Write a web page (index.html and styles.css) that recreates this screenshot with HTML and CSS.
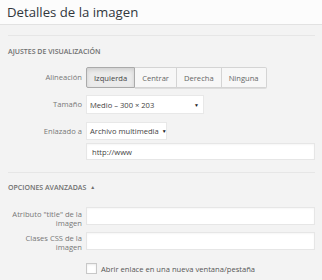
FILE: index.html
```html
<!DOCTYPE html>
<html lang="es">

<head>
    <meta charset="UTF-8" />
    <meta name="viewport" content="width=device-width, initial-scale=1.0" />
    <title>Detalles de la imagen</title>
    <link rel="stylesheet" href="styles.css">
</head>

<body>
    <div class="media-header">
        <h1>Detalles de la imagen</h1>
    </div>

    <div class="media-panel">
        <div class="rule rule-top"></div>
        <h2 class="section-title">Ajustes de visualización</h2>

        <div class="setting">
            <span class="setting-label">Alineación</span>
            <div class="button-group">
                <button class="active">Izquierda</button>
                <button>Centrar</button>
                <button>Derecha</button>
                <button>Ninguna</button>
            </div>
        </div>

        <div class="setting setting-size">
            <span class="setting-label">Tamaño</span>
            <div class="fake-select size-select">
                <span>Medio – 300 × 203</span>
                <span class="arrow">▼</span>
            </div>
        </div>

        <div class="setting setting-link">
            <span class="setting-label">Enlazado a</span>
            <div class="fake-select link-select">
                <span>Archivo multimedia</span>
                <span class="arrow">▼</span>
            </div>
        </div>

        <div class="setting setting-url">
            <span class="setting-label"></span>
            <input type="text" class="text-input url-input" value="http://www" />
        </div>

        <div class="rule rule-middle"></div>
        <h2 class="section-title advanced-title">Opciones avanzadas <span class="toggle">▲</span></h2>

        <div class="setting setting-wide setting-title">
            <span class="setting-label">Atributo "title" de la imagen</span>
            <input type="text" class="text-input" />
        </div>

        <div class="setting setting-wide setting-class">
            <span class="setting-label">Clases CSS de la imagen</span>
            <input type="text" class="text-input" />
        </div>

        <div class="setting setting-check">
            <span class="setting-label"></span>
            <label class="check-label"><span class="checkbox"></span>Abrir enlace en una nueva ventana/pestaña</label>
        </div>
    </div>
</body>

</html>
```

FILE: styles.css
```css
body {
    margin: 0;
    padding: 0;
    background-color: #f3f3f3;
    font-family: 'Open Sans', sans-serif;
    color: #777;
    font-size: 7.6px;
}

.media-header {
    height: 24px;
    background: #fcfcfc;
    border-bottom: 1px solid #e2e2e2;
    padding-left: 7px;
}

.media-header h1 {
    margin: 0;
    font-size: 13.2px;
    font-weight: 400;
    line-height: 24px;
    color: #32373c;
}

.media-panel {
    padding: 0 7px 0 8px;
}

.rule {
    border-top: 1px solid #e6e6e6;
}

.rule-top {
    margin-top: 10px;
}

.section-title {
    margin: 11px 0 0;
    font-size: 7px;
    font-weight: 600;
    line-height: 10px;
    text-transform: uppercase;
    color: #6f6f6f;
}

.toggle {
    font-size: 5px;
    margin-left: 2px;
    vertical-align: 1px;
}

.setting {
    display: flex;
    align-items: center;
    gap: 4px;
    margin-top: 10px;
}

.setting-label {
    flex: 0 0 74px;
    text-align: right;
    line-height: 9px;
}

.button-group {
    display: flex;
    height: 21px;
}

.button-group button {
    font-family: 'Open Sans', sans-serif;
    font-size: 7.6px;
    color: #666;
    background: #f7f7f7;
    border: 1px solid #d4d4d4;
    border-left-width: 0;
    padding: 0 7px;
    margin: 0;
    box-shadow: 0 1px 0 #ddd;
}

.button-group button:first-child {
    border-left-width: 1px;
    border-radius: 2px 0 0 2px;
}

.button-group button:last-child {
    border-radius: 0 2px 2px 0;
}

.button-group button.active {
    background: #ebebeb;
    border-color: #aaa;
    box-shadow: inset 0 2px 4px rgba(0, 0, 0, 0.12);
    color: #444;
}

.fake-select {
    display: flex;
    align-items: center;
    justify-content: space-between;
    box-sizing: border-box;
    background: #fff;
    border: 1px solid #e8e8e8;
    padding: 0 4px 0 3px;
    color: #444;
    white-space: nowrap;
}

.fake-select .arrow {
    font-size: 5px;
    color: #222;
}

.setting-size {
    margin-top: 7px;
}

.size-select {
    width: 118px;
    height: 19px;
}

.setting-link {
    margin-top: 8px;
}

.link-select {
    width: 81px;
    height: 18px;
}

.link-select .arrow {
    margin-left: 3px;
}

.setting-url {
    margin-top: 3px;
}

.text-input {
    flex: 1;
    min-width: 0;
    box-sizing: border-box;
    height: 17px;
    margin: 0;
    padding: 0 5px;
    background: #fff;
    border: 1px solid #e6e6e6;
    box-shadow: inset 0 1px 2px rgba(0, 0, 0, 0.04);
    font-family: 'Open Sans', sans-serif;
    font-size: 7.6px;
    color: #444;
    outline: none;
}

.rule-middle {
    margin-top: 12px;
}

.advanced-title {
    margin-top: 9px;
}

.setting-wide {
    align-items: flex-start;
}

.setting-wide .setting-label {
    padding-top: 3px;
    line-height: 8.5px;
    height: 17px;
}

.setting-wide .text-input {
    height: 18px;
}

.setting-title {
    margin-top: 14px;
}

.setting-class {
    margin-top: 5px;
}

.setting-class .setting-label {
    padding-top: 2px;
    line-height: 9px;
}

.setting-check {
    margin-top: 12px;
}

.check-label {
    display: flex;
    align-items: center;
    gap: 4px;
    color: #555;
}

.checkbox {
    display: inline-block;
    width: 11px;
    height: 11px;
    box-sizing: border-box;
    background: #fff;
    border: 1px solid #c8c8c8;
    box-shadow: inset 0 1px 2px rgba(0, 0, 0, 0.08);
}
```
